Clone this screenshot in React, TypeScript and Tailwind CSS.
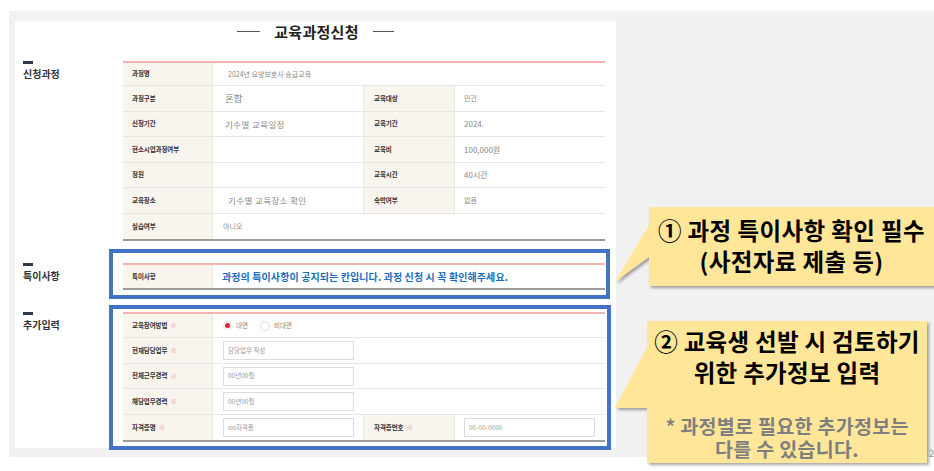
import React from "react";

const LABEL = "bg-[#f8f5ef] flex items-center text-[6.5px] font-bold text-[#333] tracking-[-0.1px]";
const VAL = "flex items-center text-[#8a8a8a]";

function Star() {
  return <span className="ml-[3px] text-[#f4a0aa] text-[7px]">※</span>;
}

function SectionLabel({ title, bold }: { title: string; bold?: boolean }) {
  return (
    <div>
      <div className="h-[2.5px] w-[10px] bg-[#2d3a4b]" />
      <div className={`mt-[4px] text-[10px] leading-[12px] text-[#333] ${bold ? "font-bold" : "font-semibold"}`}>{title}</div>
    </div>
  );
}

function Input({ ph, w = "w-[131px]" }: { ph: string; w?: string }) {
  return (
    <div className={`${w} h-[19px] border border-[#dcdcdc] bg-white flex items-center pl-[4px] text-[6.5px] text-[#999]`}>{ph}</div>
  );
}

export default function App() {
  return (
    <div className="relative w-[934px] h-[471px] bg-white overflow-hidden font-['Noto_Sans_CJK_KR','Noto_Sans',sans-serif]">
      <div className="mt-[11px] ml-[9px] h-[446px] bg-[#f1f1f1] pl-[6px] pt-[10px]">
        <div className="w-[601px] h-[427px] bg-white">
          {/* title */}
          <div className="h-[21px] flex items-center justify-center">
            <div className="w-[23px] h-px bg-[#555]" />
            <div className="mx-[14px] text-[15px] font-bold text-[#222] tracking-[0.3px] leading-[21px]">교육과정신청</div>
            <div className="w-[21px] h-px bg-[#555]" />
          </div>

          {/* section 1 */}
          <div className="mt-[19px] flex">
            <div className="w-[94px] pl-[8px] shrink-0">
              <SectionLabel title="신청과정" bold />
            </div>
            <div className="pl-[14px]">
              <div className="w-[482px] border-t-2 border-[#f2b3b3] border-b-2 border-b-[#9c9c9c]">
                <div className="h-[23px] flex border-b border-[#e6e6e6]">
                  <div className={`${LABEL} w-[90px] pl-[9px] border-r border-[#ebe8e2]`}>과정명</div>
                  <div className={`${VAL} pl-[15px] text-[7px]`}>2024년 요양보호사 승급교육</div>
                </div>
                <div className="h-[26px] flex border-b border-[#e6e6e6]">
                  <div className={`${LABEL} w-[90px] pl-[9px] border-r border-[#ebe8e2]`}>과정구분</div>
                  <div className={`${VAL} w-[150px] pl-[12px] text-[9.5px]`}>혼합</div>
                  <div className={`${LABEL} w-[92px] pl-[10px] border-x border-[#ebe8e2]`}>교육대상</div>
                  <div className={`${VAL} pl-[9px] text-[7px]`}>민간</div>
                </div>
                <div className="h-[25px] flex border-b border-[#e6e6e6]">
                  <div className={`${LABEL} w-[90px] pl-[9px] border-r border-[#ebe8e2]`}>신청기간</div>
                  <div className={`${VAL} w-[150px] pl-[12px] text-[8.5px] tracking-[0.4px]`}>기수별 교육일정</div>
                  <div className={`${LABEL} w-[92px] pl-[10px] border-x border-[#ebe8e2]`}>교육기간</div>
                  <div className={`${VAL} pl-[9px] text-[8px]`}>2024.</div>
                </div>
                <div className="h-[26px] flex border-b border-[#e6e6e6]">
                  <div className={`${LABEL} w-[90px] pl-[9px] border-r border-[#ebe8e2]`}>현소시업과정여부</div>
                  <div className={`${VAL} w-[150px]`} />
                  <div className={`${LABEL} w-[92px] pl-[10px] border-x border-[#ebe8e2]`}>교육비</div>
                  <div className={`${VAL} pl-[9px] text-[8px]`}>100,000원</div>
                </div>
                <div className="h-[25px] flex border-b border-[#e6e6e6]">
                  <div className={`${LABEL} w-[90px] pl-[9px] border-r border-[#ebe8e2]`}>정원</div>
                  <div className={`${VAL} w-[150px]`} />
                  <div className={`${LABEL} w-[92px] pl-[10px] border-x border-[#ebe8e2]`}>교육시간</div>
                  <div className={`${VAL} pl-[9px] text-[8px]`}>40시간</div>
                </div>
                <div className="h-[26px] flex border-b border-[#e6e6e6]">
                  <div className={`${LABEL} w-[90px] pl-[9px] border-r border-[#ebe8e2]`}>교육장소</div>
                  <div className={`${VAL} w-[150px] pl-[15px] text-[8.5px] tracking-[0.4px]`}>기수별 교육장소 확인</div>
                  <div className={`${LABEL} w-[92px] pl-[10px] border-x border-[#ebe8e2]`}>숙박여부</div>
                  <div className={`${VAL} pl-[9px] text-[7px]`}>없음</div>
                </div>
                <div className="h-[25px] flex">
                  <div className={`${LABEL} w-[90px] pl-[9px] border-r border-[#ebe8e2]`}>실습여부</div>
                  <div className={`${VAL} pl-[10px] text-[7px]`}>아니오</div>
                </div>
              </div>
            </div>
          </div>

          {/* section 2 */}
          <div className="mt-[8px] flex">
            <div className="w-[94px] pl-[8px] pt-[14px] shrink-0">
              <SectionLabel title="특이사항" />
            </div>
            <div className="border-4 border-[#4472c4] pl-[10px] pt-[10px] pb-[5px] pr-px">
              <div className="w-[482px] border-t-2 border-[#f2b3b3] border-b-2 border-b-[#9c9c9c]">
                <div className="h-[23px] flex">
                  <div className={`${LABEL} w-[90px] pl-[9px] border-r border-[#ebe8e2]`}>특이사항</div>
                  <div className="flex items-center pl-[9px] text-[10px] tracking-[0.1px] font-bold text-[#1b6dc1]">
                    과정의 특이사항이 공지되는 칸입니다. 과정 신청 시 꼭 확인해주세요.
                  </div>
                </div>
              </div>
            </div>
          </div>

          {/* section 3 */}
          <div className="mt-[6px] flex">
            <div className="w-[94px] pl-[8px] pt-[7px] shrink-0">
              <SectionLabel title="추가입력" />
            </div>
            <div className="border-4 border-[#4472c4] pl-[10px] pt-[3px] pb-[4px] pr-[2px] bg-white">
              <div className="w-[482px] border-t-2 border-[#f2b3b3] border-b-2 border-b-[#9c9c9c]">
                <div className="h-[24px] flex border-b border-[#e6e6e6]">
                  <div className={`${LABEL} w-[90px] pl-[9px] border-r border-[#ebe8e2]`}>교육참여방법<Star /></div>
                  <div className="flex items-center pl-[10px] text-[6.5px] text-[#888]">
                    <div className="w-[9px] h-[9px] rounded-full border border-[#e2e2e2] flex items-center justify-center">
                      <div className="w-[5px] h-[5px] rounded-full bg-[#e0242b]" />
                    </div>
                    <span className="ml-[4px]">대면</span>
                    <div className="ml-[12px] w-[10px] h-[10px] rounded-full border border-[#dcdcdc]" />
                    <span className="ml-[4px]">비대면</span>
                  </div>
                </div>
                <div className="h-[26px] flex border-b border-[#e6e6e6]">
                  <div className={`${LABEL} w-[90px] pl-[9px] border-r border-[#ebe8e2]`}>현재담당업무<Star /></div>
                  <div className="flex items-center pl-[10px]"><Input ph="담당업무 작성" /></div>
                </div>
                <div className="h-[25px] flex border-b border-[#e6e6e6]">
                  <div className={`${LABEL} w-[90px] pl-[9px] border-r border-[#ebe8e2]`}>전체근무경력<Star /></div>
                  <div className="flex items-center pl-[10px]"><Input ph="00년00월" /></div>
                </div>
                <div className="h-[26px] flex border-b border-[#e6e6e6]">
                  <div className={`${LABEL} w-[90px] pl-[9px] border-r border-[#ebe8e2]`}>해당업무경력<Star /></div>
                  <div className="flex items-center pl-[10px]"><Input ph="00년00월" /></div>
                </div>
                <div className="h-[25px] flex">
                  <div className={`${LABEL} w-[90px] pl-[9px] border-r border-[#ebe8e2]`}>자격증명<Star /></div>
                  <div className="w-[150px] flex items-center pl-[10px]"><Input ph="oo자격증" /></div>
                  <div className={`${LABEL} w-[92px] pl-[10px] border-x border-[#ebe8e2]`}>자격증번호<Star /></div>
                  <div className="flex items-center pl-[9px]"><Input ph="00-00-0000" /></div>
                </div>
              </div>
            </div>
          </div>
        </div>
      </div>

      {/* callout 1 */}
      <div className="absolute left-[612px] top-[204px] w-[330px] h-[90px]">
        <svg className="absolute inset-0 drop-shadow-[2px_2px_1.5px_rgba(0,0,0,0.35)]" width="330" height="90" viewBox="0 0 330 90">
          <path d="M37,3 H330 V82 H37 V53 L3,78 L37,21 Z" fill="#ffe699" />
        </svg>
        <div className="absolute left-[37px] top-[3px] w-[285px] pt-[7.5px] flex flex-col items-center text-[23.5px] tracking-[0.4px] leading-[31px] font-bold text-black whitespace-nowrap">
          <div>① 과정 특이사항 확인 필수</div>
          <div>(사전자료 제출 등)</div>
        </div>
      </div>

      {/* callout 2 */}
      <div className="absolute left-[612px] top-[318px] w-[322px] h-[153px]">
        <svg className="absolute inset-0 drop-shadow-[2px_2px_1.5px_rgba(0,0,0,0.35)]" width="322" height="153" viewBox="0 0 322 153">
          <path d="M35,3 H315 V145 H35 V90 H3 L35,29 Z" fill="#ffe699" />
        </svg>
        <div className="absolute left-[35px] top-[3px] w-[280px] pt-[4.5px] flex flex-col items-center font-bold whitespace-nowrap">
          <div className="text-[23.5px] tracking-[0.3px] leading-[31px] text-black">② 교육생 선발 시 검토하기</div>
          <div className="text-[23.5px] tracking-[0.3px] leading-[31px] text-black">위한 추가정보 입력</div>
          <div className="mt-[26px] text-[19.5px] tracking-[0.3px] leading-[23px] text-[#7f7f7f]">* 과정별로 필요한 추가정보는</div>
          <div className="text-[19.5px] tracking-[0.3px] leading-[23px] text-[#7f7f7f]">다를 수 있습니다.</div>
        </div>
      </div>

      <div className="absolute left-[929px] top-[447px] text-[9px] text-[#999]">2</div>
    </div>
  );
}
